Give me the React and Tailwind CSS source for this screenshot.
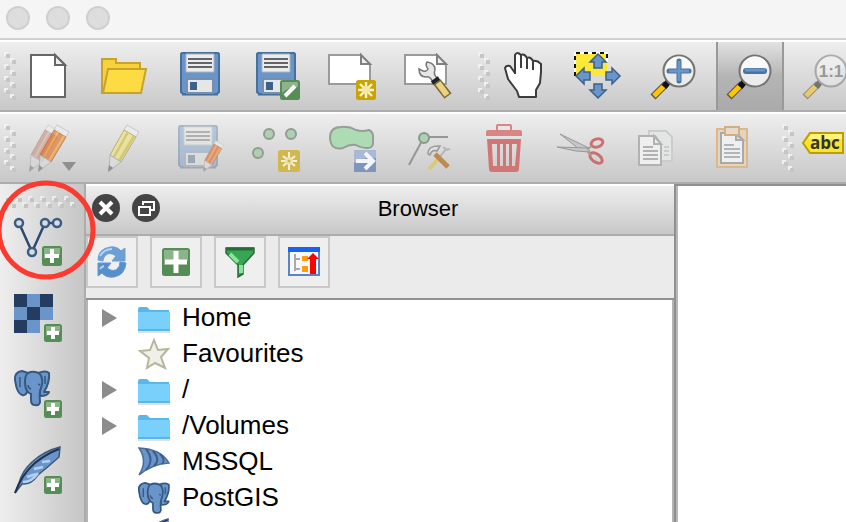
import React from "react";

const OUT = "#2c4a70";
const BLUE = "#6a95cb";

function Icon({ children }) {
  return (
    <svg viewBox="0 0 48 48" aria-hidden="true" className="size-12 shrink-0 overflow-visible">
      {children}
    </svg>
  );
}

function Grip() {
  return (
    <svg viewBox="0 0 12 48" aria-hidden="true" className="h-12 w-3 shrink-0">
      {[0, 12, 24, 36].map((y) => (
        <g key={y}>
          <path d={`M0 ${y}h4v4h-4zM6 ${y + 6}h4v4h-4z`} fill="#f0f0f0" />
          <path d={`M2 ${y + 2}h4v4h-4zM8 ${y + 8}h4v4h-4z`} fill="#c6c6c6" />
        </g>
      ))}
    </svg>
  );
}

function SideGrip() {
  return (
    <svg viewBox="0 0 72 12" aria-hidden="true" className="ml-1 h-3 w-[72px] shrink-0">
      {[0, 12, 24, 36, 48, 60].map((x) => (
        <g key={x}>
          <path d={`M${x} 0h4v4h-4zM${x + 6} 6h4v4h-4z`} fill="#ececec" />
          <path d={`M${x + 2} 2h4v4h-4zM${x + 8} 8h4v4h-4z`} fill="#c4c4c4" />
        </g>
      ))}
    </svg>
  );
}

function Plus({ x, y, s }) {
  const c = s / 2;
  return (
    <g transform={`translate(${x} ${y})`}>
      <rect width={s} height={s} rx="2.5" fill="#568c55" />
      <path d={`M2 2h${s - 4}v${c - 3}q-${c} 0-${s - 4} 4z`} fill="#8db38b" />
      <path d={`M${c} 3v${s - 6}M3 ${c}h${s - 6}`} stroke="#fff" strokeWidth={s > 24 ? 5 : 4} />
    </g>
  );
}

function NewBadge({ x, s }) {
  const c = x + s / 2;
  return (
    <g>
      <rect x={x} y={x} width={s} height={s} rx="2.5" fill="#c9a300" />
      <path d={`M${c} ${c - 8}v16M${c - 8} ${c}h16M${c - 6} ${c - 6}l12 12M${c + 6} ${c - 6}l-12 12`} stroke="#fff6cf" strokeWidth="2.4" />
      <circle cx={c} cy={c} r="4" fill="#f5e6a0" />
    </g>
  );
}

function Disk() {
  return (
    <g>
      <path d="M6 43h36" stroke="#8f9aa6" strokeWidth="2" />
      <path d="M6 1H42l1 1V40l-2 2H7l-2-2V2z" fill={BLUE} stroke="#46709c" strokeWidth="2" />
      <path d="M10 2h28v18H10z" fill="#ececec" stroke="#a9b4c0" />
      <path d="M12 7h24M12 11h24M12 15h24" stroke="#646464" strokeWidth="2" />
      <path d="M11 27h26v14H11z" fill="#e6e6e6" stroke="#7590ae" strokeWidth="2" />
      <path d="M14 30h7v8h-7z" fill="#3d6187" />
    </g>
  );
}

const Sheet = () => (
  <g stroke="#9a9a9a" strokeWidth="2">
    <path d="M1 3H33L42 13V32H1z" fill="#fff" />
    <path d="M33 3V12H42z" fill="#eee" stroke="#808080" />
  </g>
);

function Pencil({ body, stripe, edge }) {
  return (
    <g>
      <path d="M27 1L39 8L36 13L24 6z" fill="#eee" stroke="#bbb" />
      <path d="M24 6L36 13L21 38L10 31z" fill={body} stroke={edge} strokeWidth="1" />
      <path d="M28 8L14 33M34 12L19 37" stroke={stripe} strokeWidth="2.5" />
      <path d="M10 31L21 38L9 47z" fill="#ddd" stroke="#aaa" />
      <path d="M9 41L13 44L8 48z" fill="#777" />
    </g>
  );
}

function Lens({ children }) {
  return (
    <g>
      <path d="M16 32L3 45" stroke="#555" strokeWidth="7" />
      <path d="M15 33L4 44" stroke="#ffc600" strokeWidth="5" />
      <path d="M14 35L19 29" stroke="#111" strokeWidth="6" />
      <circle cx="29" cy="19" r="15.5" fill="#ececec" stroke="#747474" strokeWidth="2" />
      <path d="M16 20A13 13 0 0 1 42 15Q30 24 16 20z" fill="#fff" opacity=".7" />
      {children}
    </g>
  );
}

const Elephant = () => (
  <g fill={BLUE} stroke="#35587f" strokeWidth="2" strokeLinejoin="round">
    <path d="M24 3Q32 0 35 3Q36 12 30 22L35 22Q34 26 26 26z" />
    <path d="M8 1Q0 2 1 10Q3 24 8 25Q12 26 14 20L14 3z" />
    <path d="M14 3Q20 0 26 4Q30 10 27 18Q25 22 26 32Q25 36 21 35Q17 35 17 30V24Q11 22 11 12Q11 5 14 3z" />
    <path d="M14 15Q14 18 17 19M24 14l2 1M6 7V17M31 6V14" fill="none" strokeWidth="1.5" />
  </g>
);

const Feather = () => (
  <g>
    <path d="M46 1Q30 5 18 16Q8 25 5 37L1 47L8 38Q17 39 24 29Q34 21 45 11z" fill={BLUE} stroke="#3d5878" strokeWidth="1.5" />
    <path d="M9 36Q18 36 24 27M13 31l9-3M20 23l9-2M28 16l8-1" stroke="#b4d0ee" strokeWidth="2.5" fill="none" />
    <path d="M1 47Q8 28 21 17Q32 8 45 3" fill="none" stroke="#1e3350" strokeWidth="2" />
  </g>
);

const ARROW = "M24 2L32 10H28V16H20V10H16z";

const fileTools = [
  ["New project", <g stroke="#666" strokeWidth="2"><path d="M7 3H31L41 13V45H7z" fill="#fff" /><path d="M31 3V13H41z" fill="#eee" /></g>],
  ["Open project", <g stroke="#c6a32a" strokeWidth="2"><path d="M2 41V7H16V11H40V18L37 41z" fill="#f7d03a" /><path d="M8 17H46L41 41H3z" fill="#fddb43" /></g>],
  ["Save project", <Disk />],
  ["Save project as", <g><Disk /><rect x="28" y="28" width="20" height="20" rx="2.5" fill="#568c55" /><path d="M30 30h16v5q-10 0-16 6z" fill="#8db38b" /><path d="M33 44L43 34" stroke="#fff" strokeWidth="4" /></g>],
  ["New print composer", <g><Sheet /><NewBadge x={28} s={20} /></g>],
  ["Composer manager", <g><Sheet />
    <path d="M23 10Q21 13 24 17Q22 21 17 18L15 17Q15 25 22 25Q26 24 29 30L33 26Q29 22 31 18Q31 11 23 10z" fill="#e6e6e6" stroke="#777" strokeWidth="1.5" />
    <path d="M33 30L44 44" stroke="#756a45" strokeWidth="9" /><path d="M34 31L43 43" stroke="#ecd37b" strokeWidth="6" />
    <path d="M28 31L35 26" stroke="#222" strokeWidth="4" /></g>],
];

const mapTools = [
  ["Pan map", <g fill="#fff" stroke="#3c3c3c" strokeWidth="2" strokeLinejoin="round">
    <path d="M7 16Q8 13 12 14L17 21V3Q19 -1 23 3Q26 1 29 6Q32 4 35 9Q39 8 43 12V20L42 31L38 38V45H21L19 39L10 27z" />
    <path d="M23 3V16M29 6V17M35 9V18M17 18V22" fill="none" /></g>],
  ["Pan map to selection", <g><path d="M1 1H33V24H1z" fill="#fde83a" />
    <path d="M1 24V1H33V10" fill="none" stroke="#fff" strokeWidth="2" /><path d="M1 24V1H33V10" fill="none" stroke="#111" strokeWidth="2" strokeDasharray="4 4" />
    <g fill={BLUE} stroke="#3c6188" strokeWidth="1.5">
      <path d={ARROW} />
      <path d={ARROW} transform="rotate(90 24 24)" />
      <path d={ARROW} transform="rotate(180 24 24)" />
      <path d={ARROW} transform="rotate(270 24 24)" /></g></g>],
  ["Zoom in", <Lens><path d="M29 9V29M19 19H39" stroke="#49729f" strokeWidth="5" strokeLinecap="round" /><path d="M29 9V29M19 19H39" stroke={BLUE} strokeWidth="3" /></Lens>],
  ["Zoom out", <Lens><path d="M20 19H38" stroke="#49729f" strokeWidth="6" strokeLinecap="round" /><path d="M19 18H39" stroke={BLUE} strokeWidth="3" /></Lens>, true],
  ["Zoom to native resolution", <g opacity=".5"><Lens><text x="29" y="25" textAnchor="middle" className="font-['Liberation_Sans',Arial,sans-serif] text-[17px] font-bold" fill="#555">1:1</text></Lens></g>],
];

const editTools = [
  ["Current edits", <g><g opacity=".5"><g transform="translate(-3 0)"><Pencil body="#c08468" stripe="#d3a48c" edge="#96705f" /></g></g><g opacity=".65"><g transform="translate(6 0)"><Pencil body="#e07030" stripe="#f0a030" edge="#bd572b" /></g></g><path d="M38 38H52L45 47z" fill="#8f8f8f" /></g>],
  ["Toggle editing", <g opacity=".75"><Pencil body="#eee48b" stripe="#cfc05a" edge="#a9a25d" /></g>],
  ["Save layer edits", <g opacity=".55"><g transform="translate(-2 1)"><g opacity=".7"><Disk /></g></g><g transform="translate(22 16) scale(.66)"><Pencil body="#e05a10" stripe="#f09040" edge="#a9501f" /></g></g>],
  ["Add feature", <g><g fill="#acd0b0" stroke="#929c94" strokeWidth="2"><circle cx="17" cy="10" r="5" /><circle cx="39" cy="10" r="5" /><circle cx="6" cy="29" r="5" /></g>
    <rect x="26" y="26" width="22" height="22" rx="2.5" fill="#d0b84e" /><path d="M37 28v18M29 37h16M31 32l12 10M43 32L31 42" stroke="#f6f1dc" strokeWidth="2" /><circle cx="37" cy="37" r="4" fill="#eee3b0" /><circle cx="37" cy="37" r="1.5" fill="#c8b257" /></g>],
  ["Move feature", <g><path d="M13 3Q21 2 28 6Q34 8 41 6Q46 8 45 16Q46 24 40 24Q33 24 28 21Q22 20 15 24Q3 27 2 14Q2 3 13 3z" fill="#addbb3" stroke="#969e97" strokeWidth="2" />
    <path d="M26 26h22v22h-22z" fill="#8095bd" /><path d="M26 26h22v8q-12-1-22 5z" fill="#a8b9d8" /><path d="M28 37h16M37 29l8 8l-8 8" fill="none" stroke="#f3f5fa" strokeWidth="4" /></g>],
  ["Node tool", <g><path d="M44 13H20L5 41" fill="none" stroke="#969696" strokeWidth="2" /><circle cx="20" cy="14" r="5" fill="#acd0b0" stroke="#8a968c" strokeWidth="2" />
    <path d="M25 45L35 34" stroke="#d5cc74" strokeWidth="4" /><path d="M35 34L42 25L39 23M42 26l4-1" stroke="#b5b5b5" strokeWidth="2" fill="none" />
    <path d="M31 30L44 43" stroke="#bd8b52" strokeWidth="5" /><path d="M24 30Q24 21 36 22L33 27Q28 25 26 31z" fill="#ddd" stroke="#999" strokeWidth="1.5" /></g>],
  ["Delete selected", <g><path d="M6 12V8Q6 6 8 6H16V2Q16 0 18 0H30Q32 0 32 2V6H40Q42 6 42 8V12zM18 2V6H30V2z" fill="#d98583" fillRule="evenodd" />
    <path d="M7 15H41L39 45Q39 48 36 48H12Q9 48 9 45zM12 20L13 42H17V20zM20 20V42H23V20zM26 20V42H29V20zM32 20V42H35L37 20z" fill="#d07775" fillRule="evenodd" /></g>],
  ["Cut features", <g><path d="M4 10L33 24L32 28L23 25z" fill="#c6c6c6" stroke="#999" /><path d="M1 23L32 24L34 28L20 27z" fill="#c6c6c6" stroke="#999" />
    <g fill="none" stroke="#cb706e" strokeWidth="3"><ellipse cx="41" cy="19" rx="6" ry="4" transform="rotate(-15 41 19)" /><ellipse cx="40" cy="34" rx="7" ry="4" transform="rotate(35 40 34)" /></g><path d="M31 25L36 22M31 27L35 31" stroke="#a99" strokeWidth="2" /></g>],
  ["Copy features", <g><g stroke="#ccc" strokeWidth="2" fill="#e4e5e5"><path d="M17 7H34L40 13V37H17z" /><path d="M32 23H37M32 27H37M32 31H37" /></g>
    <g stroke="#b2b2b2" strokeWidth="2" fill="#efefef"><path d="M7 12H23L29 20V41H7z" /><path d="M22 12V20H29z" /><path d="M11 23H21M11 27H26M11 31H26M11 35H26" /></g></g>],
  ["Paste features", <g><path d="M9 5H39V43H9z" fill="#e6d5bd" stroke="#d9b88b" strokeWidth="2" /><path d="M13 9H29L35 16V39H13z" fill="#edeff0" stroke="#a9a9a9" strokeWidth="2" /><path d="M28 10V16H35z" fill="#ddd" stroke="#aaa" strokeWidth="2" />
    <path d="M16 21H26M16 25H32M16 29H32M16 33H32" stroke="#b4b4b4" strokeWidth="2" /><path d="M17 3H31V11H17z" fill="#e5dacb" stroke="#d3ae80" strokeWidth="2" /></g>],
];

const labelTools = [
  ["Layer labeling", <g><path d="M8 9H41V29H8L1 19z" fill="#f8e52c" stroke="#bd9d00" strokeWidth="2" /><path d="M9 10H40V15H6z" fill="#fff27a" />
    <text x="8" y="25" className="font-['Open_Sans',sans-serif] text-[17px] font-bold" fill="#333">abc</text></g>],
];

function ToolGroup({ tools, className = "" }) {
  return (
    <div className={"flex h-full shrink-0 items-center " + className}>
      <Grip />
      <div className="flex h-full gap-3">
        {tools.map(([label, art, active]) => (
          <button key={label} type="button" aria-label={label} aria-pressed={!!active}
            className={active
              ? "-mx-0.5 flex w-[68px] items-center justify-center border-x-2 border-[#999999] bg-linear-to-b from-[#e2e2e2] via-[#b5b5b5] to-[#aaaaaa]"
              : "flex w-16 items-center justify-center"}>
            <Icon>{art}</Icon>
          </button>
        ))}
      </div>
    </div>
  );
}

function Toolbar({ label, children }) {
  return (
    <div role="toolbar" aria-label={label} className="flex h-[72px] shrink-0 overflow-hidden border-t-2 border-b-2 border-t-white border-b-[#acacac] bg-linear-to-b from-[#eeeeee] to-[#c8c8c8] pl-1">
      {children}
    </div>
  );
}

const layerTools = [
  ["Add vector layer", <g><path d="M5 5L18 34L31 5H43" fill="none" stroke={OUT} strokeWidth="2.5" /><g fill="#d8dde3" stroke="#3c5b80" strokeWidth="2.5"><circle cx="5" cy="5" r="4" /><circle cx="31" cy="5" r="4" /><circle cx="43" cy="5" r="4" /><circle cx="18" cy="34" r="4" /></g><Plus x={28} y={28} s={20} /></g>],
  ["Add raster layer", <g><path d="M0 0H39V26H26V39H0z" fill={BLUE} /><path d="M0 0H13V13H0zM26 0H39V13H26zM13 13H26V26H13zM0 26H13V39H0z" fill="#233c60" /><Plus x={30} y={30} s={18} /></g>],
  ["Add PostGIS layer", <g><Elephant /><Plus x={30} y={30} s={18} /></g>],
  ["Add SpatiaLite layer", <g><Feather /><Plus x={30} y={30} s={18} /></g>],
];

const browserTools = [
  ["Refresh", <g><path d="M2 14Q2 3 14 1Q21 0 25 5L29 2V15H16L20 10Q13 5 9 10Q7 12 7 15z" fill="#6b9fd6" stroke="#6f9fd2" /><path d="M30 17Q29 29 18 31Q10 32 6 27L2 30V17H15L11 22Q18 27 22 22Q24 20 24 16z" fill="#5590cd" stroke="#6397cd" /><path d="M4 10Q8 3 16 3M8 20Q5 21 4 23" fill="none" stroke="#b5d4f2" strokeWidth="2" /></g>],
  ["Add selected layers", <Plus x={2} y={2} s={28} />],
  ["Filter browser", <g><path d="M2 2H30V7L19 19V28L14 31V19L2 7z" fill="#37a652" stroke="#286b37" strokeWidth="1.5" /><path d="M3 3H29" stroke="#286b37" strokeWidth="3" /><path d="M6 8L14 16M17 19V27" stroke="#8ae49b" strokeWidth="4" /></g>],
  ["Collapse all", <g><path d="M1 2H31V29H1z" fill="#f7f9ff" stroke="#5c83c9" strokeWidth="2" /><path d="M0 1H32V6H0z" fill="#1762ef" /><path d="M7 8V25M7 13H12M7 23H12" fill="none" stroke="#aaa" strokeWidth="2" /><path d="M14 10H20V15H14zM14 20H20V26H14z" fill="#ff9d0a" /><path d="M25 7L31 13H28V28H22V13H19z" fill="#f00" /></g>],
];

const Folder = () => (
  <g><path d="M0 8Q0 5 2 5H9L12 8H31V28H0z" fill="#5ab7e9" /><path d="M0 10H32V29H0z" fill="#78d0fb" /><path d="M0 30H32" stroke="#b9c4ca" strokeWidth="1" /><path d="M0 28H32" stroke="#5bb6e6" strokeWidth="2" /></g>
);
const Star = () => <path d="M16 2L20 12L30 11L23 19L27 30L17 25L9 30L11 20L2 13L12 12z" fill="#f0f0ea" stroke="#b6b69b" strokeWidth="2" />;
const Sail = () => <g><path d="M1 2Q23 3 31 17Q14 18 1 29Q10 15 1 2z" fill={BLUE} stroke="#4a6c95" strokeWidth="1.5" /><path d="M8 3Q17 14 8 24M15 5Q23 14 16 20M22 8Q28 14 24 18" fill="none" stroke="#3c5e88" strokeWidth="2" /></g>;

const rows = [
  ["Home", <Folder />, true],
  ["Favourites", <Star />, false],
  ["/", <Folder />, true],
  ["/Volumes", <Folder />, true],
  ["MSSQL", <Sail />, false],
  ["PostGIS", <g transform="scale(.88)"><Elephant /></g>, false],
  ["", <g transform="scale(.66)"><Feather /></g>, false],
];

export default function App() {
  return (
    <div className="relative flex h-screen w-full flex-col overflow-hidden bg-white font-['Liberation_Sans',Arial,sans-serif] text-black">
      <header className="flex h-10 shrink-0 gap-4 border-b-2 border-[#d0d0d0] bg-[#f5f5f5] px-1.5 pt-1.5">
        {["Close window", "Minimize window", "Zoom window"].map((label) => (
          <button key={label} type="button" aria-label={label} className="size-6 rounded-full border-2 border-[#cfcfcf] bg-[#dddddd]" />
        ))}
      </header>

      <Toolbar label="Project and navigation">
        <ToolGroup tools={fileTools} />
        <ToolGroup tools={mapTools} className="ml-[18px]" />
      </Toolbar>
      <Toolbar label="Digitizing">
        <ToolGroup tools={editTools} />
        <ToolGroup tools={labelTools} className="ml-[18px]" />
      </Toolbar>

      <div className="flex min-h-0 flex-1">
        <nav aria-label="Manage layers" className="flex w-[86px] shrink-0 flex-col overflow-hidden border-r-2 border-[#acacac] bg-linear-to-r from-[#eeeeee] to-[#c6c6c6] pt-3">
          <SideGrip />
          <div className="mt-2.5 flex flex-col gap-7 pl-3.5">
            {layerTools.map(([label, art]) => (
              <button key={label} type="button" aria-label={label} className="size-12"><Icon>{art}</Icon></button>
            ))}
          </div>
        </nav>

        <section aria-label="Browser" className="flex w-[588px] shrink-0 flex-col overflow-hidden bg-[#ebebeb]">
          <div className="flex h-[52px] shrink-0 items-center gap-3 border-t-2 border-b-2 border-t-white border-b-[#acacac] bg-linear-to-b from-[#eeeeee] to-[#c8c8c8] pr-2.5 pb-1 pl-1.5">
            <button type="button" aria-label="Close panel" className="size-7">
              <svg viewBox="0 0 28 28" aria-hidden="true"><circle cx="14" cy="14" r="14" fill="#444" /><path d="M8 8L20 20M20 8L8 20" stroke="#fff" strokeWidth="4" /></svg>
            </button>
            <button type="button" aria-label="Float panel" className="size-7">
              <svg viewBox="0 0 28 28" aria-hidden="true"><circle cx="14" cy="14" r="14" fill="#444" /><path d="M11 11V8H22V16H19M7 13H18V21H7z" fill="none" stroke="#fff" strokeWidth="2" /></svg>
            </button>
            <h2 className="flex-1 pt-0.5 text-center text-[22px] leading-7">Browser</h2>
          </div>
          <div className="flex h-16 shrink-0 items-start gap-3 border-b-2 border-[#919191]">
            {browserTools.map(([label, art]) => (
              <button key={label} type="button" aria-label={label} className="flex size-[52px] items-center justify-center border-2 border-[#c9c9c9] bg-[#efefef]">
                <svg viewBox="0 0 32 32" aria-hidden="true" className="size-8">{art}</svg>
              </button>
            ))}
          </div>
          <ul className="min-h-0 flex-1 overflow-hidden border-x-2 border-[#b4b4b4] bg-white">
            {rows.map(([name, art, expandable], i) => (
              <li key={i} className="flex h-9 items-center pl-3.5">
                {expandable ? (
                  <button type="button" aria-label={"Expand " + name} className="w-4">
                    <svg viewBox="0 0 16 18" aria-hidden="true" className="h-[18px] w-4"><path d="M0 0L15 9L0 18z" fill="#8c8c8c" /></svg>
                  </button>
                ) : <span className="w-4" />}
                <svg viewBox="0 0 32 32" aria-hidden="true" className="ml-5 size-8">{art}</svg>
                <span className="ml-3 pb-0.5 text-[26px] leading-8">{name}</span>
              </li>
            ))}
          </ul>
        </section>

        <main aria-label="Map canvas" className="flex min-w-0 flex-1 border-t-2 border-l-2 border-[#8f8f8f] bg-white">
          <div className="w-0.5 bg-[#b8b8b8]" />
        </main>
      </div>

      <svg viewBox="0 0 100 100" aria-hidden="true" className="pointer-events-none absolute top-[180px] -left-1 size-[100px]">
        <circle cx="50" cy="50" r="47" fill="none" stroke="#fb3b30" strokeWidth="5" />
      </svg>
    </div>
  );
}
